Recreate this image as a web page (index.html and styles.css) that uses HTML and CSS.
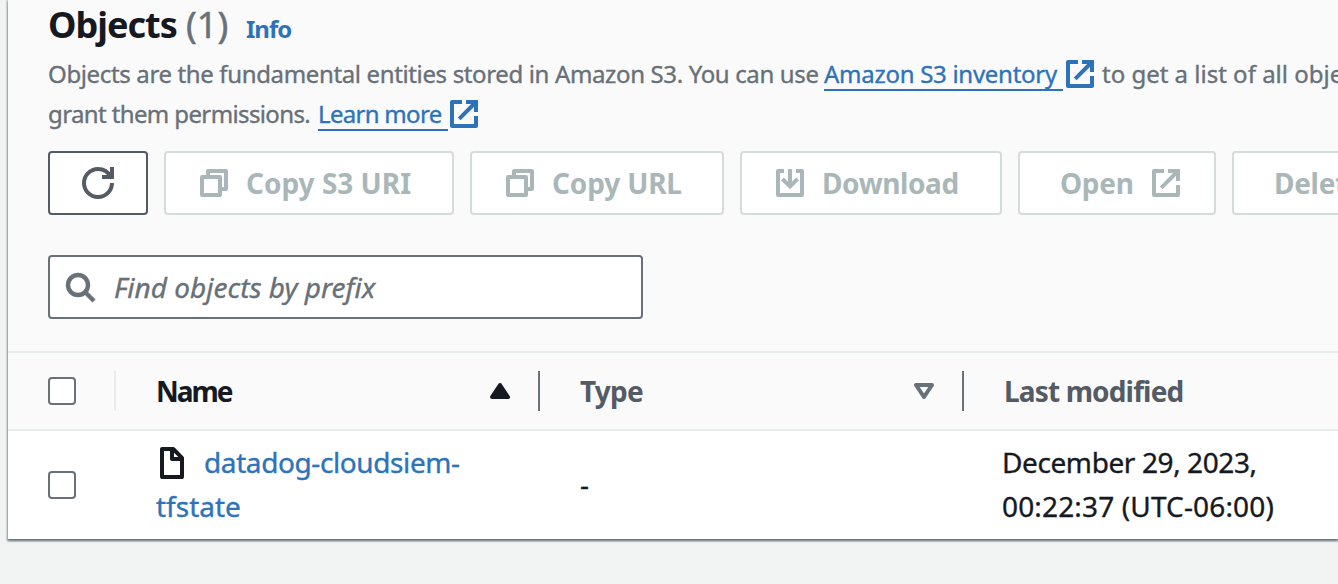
FILE: index.html
```html
<!DOCTYPE html>
<html lang="en">
<head>
<meta charset="utf-8">
<title>Objects</title>
<link rel="stylesheet" href="styles.css">
</head>
<body>
<svg class="sprite" aria-hidden="true">
  <symbol id="external" viewBox="0 0 16 16"><path d="M14 9v5H2V2h5" stroke-linejoin="round"/><path d="M9 2h5v5M5.6 10.4 14 2"/></symbol>
  <symbol id="copy" viewBox="0 0 16 16"><path d="M2 5h9v9H2zM5 5V2h9v9h-3" stroke-linejoin="round"/></symbol>
  <symbol id="download" viewBox="0 0 16 16"><path d="M5 2H2v12h12V2h-3" stroke-linejoin="round"/><path d="M8 1v9M4.2 5.9 8 9.7l3.8-3.8"/></symbol>
</svg>
<section class="panel">
  <header class="panel-head">
    <h2 class="title"><span class="title-text">Objects</span><span class="count">(1)</span><a class="info">Info</a></h2>
    <div class="desc">
      <div class="line"><span class="d1">Objects are the fundamental entities stored in Amazon S3. You can use</span><a class="link inv">Amazon S3 inventory</a><svg class="icon"><use href="#external"/></svg><span class="d2">to get a list of all obje</span></div>
      <div class="line"><span class="d3">grant them permissions.</span><a class="link more">Learn more</a><svg class="icon"><use href="#external"/></svg></div>
    </div>
    <div class="actions">
      <button class="btn refresh"><svg class="icon" viewBox="0 0 16 16"><path d="M15 8c0 3.87-3.13 7-7 7s-7-3.13-7-7 3.13-7 7-7c2.79 0 5.2 1.63 6.33 4"/><path d="M10 5h5V0"/></svg></button>
      <button class="btn uri"><svg class="icon"><use href="#copy"/></svg><span>Copy S3 URI</span></button>
      <button class="btn url"><svg class="icon"><use href="#copy"/></svg><span>Copy URL</span></button>
      <button class="btn download"><svg class="icon"><use href="#download"/></svg><span>Download</span></button>
      <button class="btn open"><span>Open</span><svg class="icon"><use href="#external"/></svg></button>
      <button class="btn delete"><span>Delete</span></button>
    </div>
    <div class="search">
      <svg class="icon" viewBox="0 0 16 16"><circle cx="7" cy="7" r="5"/><path d="m15 15-4.6-4.6"/></svg>
      <span class="placeholder">Find objects by prefix</span>
    </div>
  </header>
  <div class="row head-row">
    <div class="cell check"><i class="box"></i></div>
    <div class="cell sorted"><span class="h-name">Name</span><svg class="icon solid" viewBox="0 0 16 16"><path d="m8 5 4 6H4z" stroke-linejoin="round"/></svg></div>
    <div class="cell"><span class="h-type">Type</span><svg class="icon caret" viewBox="0 0 16 16"><path d="M4 5h8l-4 6z" stroke-linejoin="round"/></svg></div>
    <div class="cell last"><span class="h-mod">Last modified</span></div>
  </div>
  <div class="row body-row">
    <div class="cell check"><i class="box"></i></div>
    <div class="cell name"><div class="file"><svg class="icon" viewBox="0 0 16 16"><path d="M3 1h5.6L13 5.4V15H3z" stroke-linejoin="round"/><path d="M8 1v5h5" stroke-linejoin="round"/></svg><a class="n1">datadog-cloudsiem-</a></div><a class="n2">tfstate</a></div>
    <div class="cell type">-</div>
    <div class="cell date"><span class="t1">December 29, 2023,</span><span class="t2">00:22:37 (UTC-06:00)</span></div>
  </div>
</section>
</body>
</html>
```
FILE: styles.css
```css
* { box-sizing: border-box; }
body {
  margin: 0;
  height: 584px;
  overflow: hidden;
  background: #f2f3f3;
  color: #16191f;
  font: 28px/44px "Noto Sans", "Open Sans", sans-serif;
}
.sprite { display: none; }
.icon {
  width: 32px;
  height: 32px;
  flex: none;
  fill: none;
  stroke: currentColor;
  stroke-width: 2;
}
.panel {
  height: 539px;
  margin-left: 8px;
  overflow: hidden;
  background: #fff;
  box-shadow: 0 1px 2px 1px rgba(0, 28, 36, .32), 0 2px 2px rgba(0, 28, 36, .4);
  white-space: nowrap;
}
.panel-head {
  height: 353px;
  padding-left: 40px;
  overflow: hidden;
  background: #fafafa;
  border-bottom: 2px solid #eaeded;
}
.title {
  display: flex;
  align-items: baseline;
  height: 54px;
  margin: 0;
  font-size: 36px;
  line-height: 49px;
}
.title-text { width: 138px; letter-spacing: -1px; }
.count { width: 60px; color: #687078; font-weight: 400; -webkit-text-stroke: .5px; }
.info { font-size: 24px; letter-spacing: -1px; color: #2e73b8; }
.desc { font-size: 24px; line-height: 40px; color: #687078; -webkit-text-stroke: .35px; }
.line { display: flex; align-items: center; height: 40px; }
.line > * { flex: none; }
.line .icon { color: #2e73b8; margin: 0 6px 0 1px; }
.line .more + .icon { margin-left: 0; }
.link {
  height: 32px;
  margin-top: 2px;
  line-height: 30px;
  color: #2e73b8;
  border-bottom: 2px solid #2e73b8;
}
.d1 { width: 776px; letter-spacing: -.36px; }
.inv { width: 239px; letter-spacing: -.28px; }
.d3 { width: 270px; letter-spacing: -.62px; }
.more { width: 130px; letter-spacing: -.7px; }
.actions { display: flex; gap: 16px; margin-top: 17px; }
.btn {
  display: flex;
  align-items: center;
  flex: none;
  height: 64px;
  padding: 0 0 0 32px;
  gap: 16px;
  font: 700 28px/40px "Noto Sans", "Open Sans", sans-serif;
  color: #aab7b8;
  background: #fff;
  border: 2px solid #d5dbdb;
  border-radius: 4px;
}
.refresh { width: 100px; color: #545b64; border-color: #545b64; }
.uri { width: 290px; }
.url { width: 254px; letter-spacing: -.15px; }
.download { width: 262px; letter-spacing: -.4px; }
.open { width: 198px; padding-left: 40px; letter-spacing: -.3px; }
.delete { width: 160px; padding-left: 40px; letter-spacing: -.3px; }
.search {
  display: flex;
  align-items: center;
  width: 595px;
  height: 64px;
  margin-top: 40px;
  padding-left: 14px;
  gap: 18px;
  background: #fff;
  color: #687078;
  border: 2px solid #687078;
  border-radius: 4px;
}
.search .icon { stroke-width: 2.2; }
.placeholder { font-style: italic; -webkit-text-stroke: .35px; }
.row {
  display: grid;
  grid-template-columns: 108px 424px 424px minmax(0, 1fr);
}
.head-row {
  height: 78px;
  align-items: center;
  background: #fafafa;
  border-bottom: 2px solid #eaeded;
  color: #545b64;
  font-weight: 700;
}
.head-row .cell {
  display: flex;
  align-items: center;
  justify-content: space-between;
  height: 40px;
  padding: 0 22px 0 40px;
  border-right: 2px solid #687078;
}
.head-row .check { border-color: #eaeded; }
.head-row .last { border-right: 0; }
.h-name { letter-spacing: -2px; }
.h-type { letter-spacing: -.8px; }
.h-mod { letter-spacing: -.85px; }
.sorted { color: #16191f; }
.solid { fill: currentColor; }
.caret { color: #687078; }
.box {
  display: block;
  width: 28px;
  height: 28px;
  background: #fff;
  border: 2px solid #687078;
  border-radius: 4px;
}
.body-row { height: 108px; align-items: center; -webkit-text-stroke: .35px; }
.body-row .cell { padding-left: 40px; }
.body-row .name, .body-row .type, .body-row .date { padding-bottom: 2px; }
.body-row .date { display: grid; padding-left: 38px; }
.t1, .n1 { letter-spacing: -.4px; }
.t2 { letter-spacing: .15px; }
.name { color: #2e73b8; }
.file { display: flex; align-items: center; gap: 16px; height: 44px; }
.file .icon { color: #16191f; margin-top: 2px; }
```
